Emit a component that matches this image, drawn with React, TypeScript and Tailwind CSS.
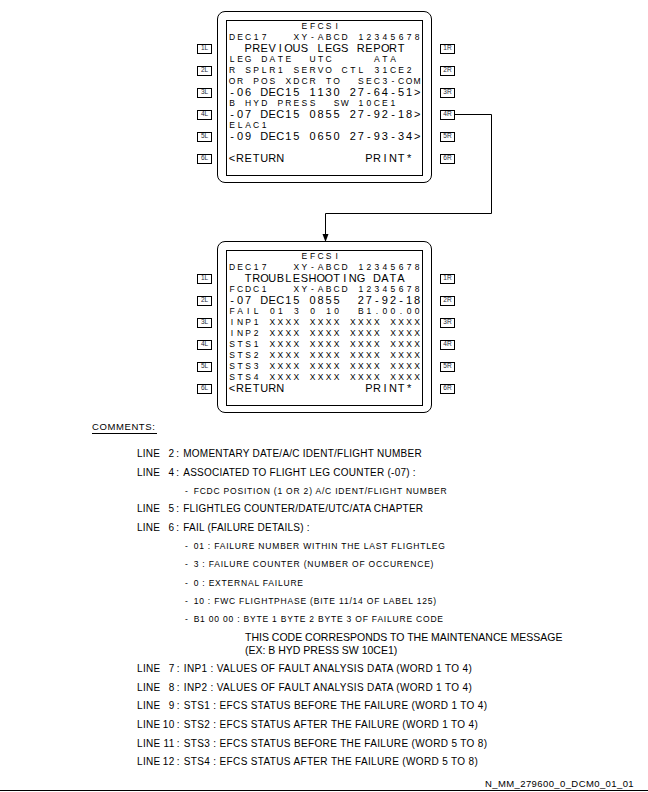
import React from 'react';

type Line = [string, boolean];

const topLines: Line[] = [
  ['         EFCSI', false],
  ['DEC17   XY-ABCD 12345678', false],
  ['  PREVIOUS LEGS REPORT', true],
  ['LEG DATE  UTC     ATA', false],
  ['R SPLR1 SERVO CTL 31CE2', false],
  ['OR POS XDCR TO  SEC3-COM', false],
  ['-06 DEC15 1130 27-64-51>', true],
  ['B HYD PRESS  SW 10CE1', false],
  ['-07 DEC15 0855 27-92-18>', true],
  ['ELAC1', false],
  ['-09 DEC15 0650 27-93-34>', true],
  ['', false],
  ['<RETURN          PRINT*', true],
  ['', false],
];

const bottomLines: Line[] = [
  ['         EFCSI', false],
  ['DEC17   XY-ABCD 12345678', false],
  ['  TROUBLESHOOTING DATA', true],
  ['FCDC1   XY-ABCD 12345678', false],
  ['-07 DEC15 0855  27-92-18', true],
  ['FAIL 01 3 0 10  B1.00.00', false],
  ['INP1 XXXX XXXX XXXX XXXX', false],
  ['INP2 XXXX XXXX XXXX XXXX', false],
  ['STS1 XXXX XXXX XXXX XXXX', false],
  ['STS2 XXXX XXXX XXXX XXXX', false],
  ['STS3 XXXX XXXX XXXX XXXX', false],
  ['STS4 XXXX XXXX XXXX XXXX', false],
  ['<RETURN          PRINT*', true],
  ['', false],
];

const ScreenRow = ({ text, big }: { text: string; big: boolean }) => (
  <div className="flex h-[11px] items-center">
    {text.padEnd(24).split('').map((c, i) => (
      <span
        key={i}
        className={
          big
            ? 'inline-block w-[8.05px] shrink-0 text-center text-[11px] leading-none'
            : 'inline-block w-[8.05px] shrink-0 text-center text-[8.5px] leading-none'
        }
      >
        {c === ' ' ? '\u00a0' : c}
      </span>
    ))}
  </div>
);

const KeyColumn = ({ side }: { side: 'L' | 'R' }) => (
  <div className="flex w-[15px] flex-col pt-[32px]">
    {[1, 2, 3, 4, 5, 6].map((n) => (
      <div key={n} className="flex h-[22px] items-start">
        <div className="flex h-[11px] items-center">
          <div className="flex h-[10px] w-[15px] items-center justify-center border border-black text-[6.5px] leading-none text-gray-800">
            {n}
            {side}
          </div>
        </div>
      </div>
    ))}
  </div>
);

const Mcdu = ({ lines }: { lines: Line[] }) => (
  <div className="ml-[197px] flex items-start">
    <KeyColumn side="L" />
    <div className="ml-[5px] w-[215px] rounded-[8px] border border-black px-[8px] pt-[8px] pb-[6px]">
      <div className="border border-black pl-[1px]">
        {lines.map(([t, big], i) => (
          <ScreenRow key={i} text={t} big={big} />
        ))}
      </div>
    </div>
    <div className="ml-[8px]">
      <KeyColumn side="R" />
    </div>
  </div>
);

const LineNote = ({ n, text, tall }: { n: string; text: string; tall?: boolean }) => (
  <div
    className={
      tall
        ? 'flex h-[18.6px] items-center pl-[137px] text-[10px] leading-none tracking-[0.35px]'
        : 'flex h-[18.4px] items-center pl-[137px] text-[10px] leading-none tracking-[0.25px]'
    }
  >
    <span>LINE</span>
    <span className="w-[14px] text-right">{n}</span>
    <span className="ml-[2px]">:</span>
    <span className="ml-[4px]">{text}</span>
  </div>
);

const SubNote = ({ text }: { text: string }) => (
  <div className="flex h-[18.4px] items-center pl-[185px] text-[8.5px] leading-none tracking-[0.8px]">
    <span>-</span>
    <span className="ml-[5px]">{text}</span>
  </div>
);

export default function App() {
  return (
    <div className="relative h-[792px] w-[648px] overflow-hidden bg-white font-['Liberation_Sans',Arial,sans-serif] text-black">
      {/* connector from 4R to the second page */}
      <svg className="pointer-events-none absolute inset-0" width="648" height="792">
        <path d="M455 114.5 H491.5 V213.5 H325.5 V236" fill="none" stroke="#000" strokeWidth="1" />
        <polygon points="322.5,234 328.5,234 325.5,242" fill="#000" />
      </svg>

      <div className="pt-[11px]">
        <Mcdu lines={topLines} />
      </div>
      <div className="mt-[58px]">
        <Mcdu lines={bottomLines} />
      </div>

      <div className="mt-[9px] flex h-[12px] items-center pl-[92px]">
        <span className="border-b border-black pb-[2px] pr-[2px] text-[9.5px] leading-none tracking-[0.6px]">COMMENTS:</span>
      </div>

      <div className="mt-[11px]">
        <LineNote n="2" text="MOMENTARY DATE/A/C IDENT/FLIGHT NUMBER" />
        <LineNote n="4" text="ASSOCIATED TO FLIGHT LEG COUNTER (-07) :" />
        <SubNote text="FCDC POSITION (1 OR 2) A/C IDENT/FLIGHT NUMBER" />
        <LineNote n="5" text="FLIGHTLEG COUNTER/DATE/UTC/ATA CHAPTER" />
        <LineNote n="6" text="FAIL (FAILURE DETAILS) :" />
        <SubNote text="01 : FAILURE NUMBER WITHIN THE LAST FLIGHTLEG" />
        <SubNote text="3 : FAILURE COUNTER (NUMBER OF OCCURENCE)" />
        <SubNote text="0 : EXTERNAL FAILURE" />
        <SubNote text="10 : FWC FLIGHTPHASE (BITE 11/14 OF LABEL 125)" />
        <SubNote text="B1 00 00 : BYTE 1 BYTE 2 BYTE 3 OF FAILURE CODE" />
        <div className="mt-[2px] flex h-[13px] items-center pl-[245px] text-[10.5px] leading-none">
          THIS CODE CORRESPONDS TO THE MAINTENANCE MESSAGE
        </div>
        <div className="flex h-[13px] items-center pl-[245px] text-[10.5px] leading-none">
          (EX: B HYD PRESS SW 10CE1)
        </div>
        <div className="mt-[3px]">
          <LineNote tall n="7" text="INP1 : VALUES OF FAULT ANALYSIS DATA (WORD 1 TO 4)" />
          <LineNote tall n="8" text="INP2 : VALUES OF FAULT ANALYSIS DATA (WORD 1 TO 4)" />
          <LineNote tall n="9" text="STS1 : EFCS STATUS BEFORE THE FAILURE (WORD 1 TO 4)" />
          <LineNote tall n="10" text="STS2 : EFCS STATUS AFTER THE FAILURE (WORD 1 TO 4)" />
          <LineNote tall n="11" text="STS3 : EFCS STATUS BEFORE THE FAILURE (WORD 5 TO 8)" />
          <LineNote tall n="12" text="STS4 : EFCS STATUS AFTER THE FAILURE (WORD 5 TO 8)" />
        </div>
      </div>

      <div className="mt-[6px] flex h-[12px] items-center justify-end pr-[14px] text-[9.5px] leading-none tracking-[0.4px]">
        N_MM_279600_0_DCM0_01_01
      </div>
      <div className="mt-[1px] h-px w-full bg-black" />
    </div>
  );
}
